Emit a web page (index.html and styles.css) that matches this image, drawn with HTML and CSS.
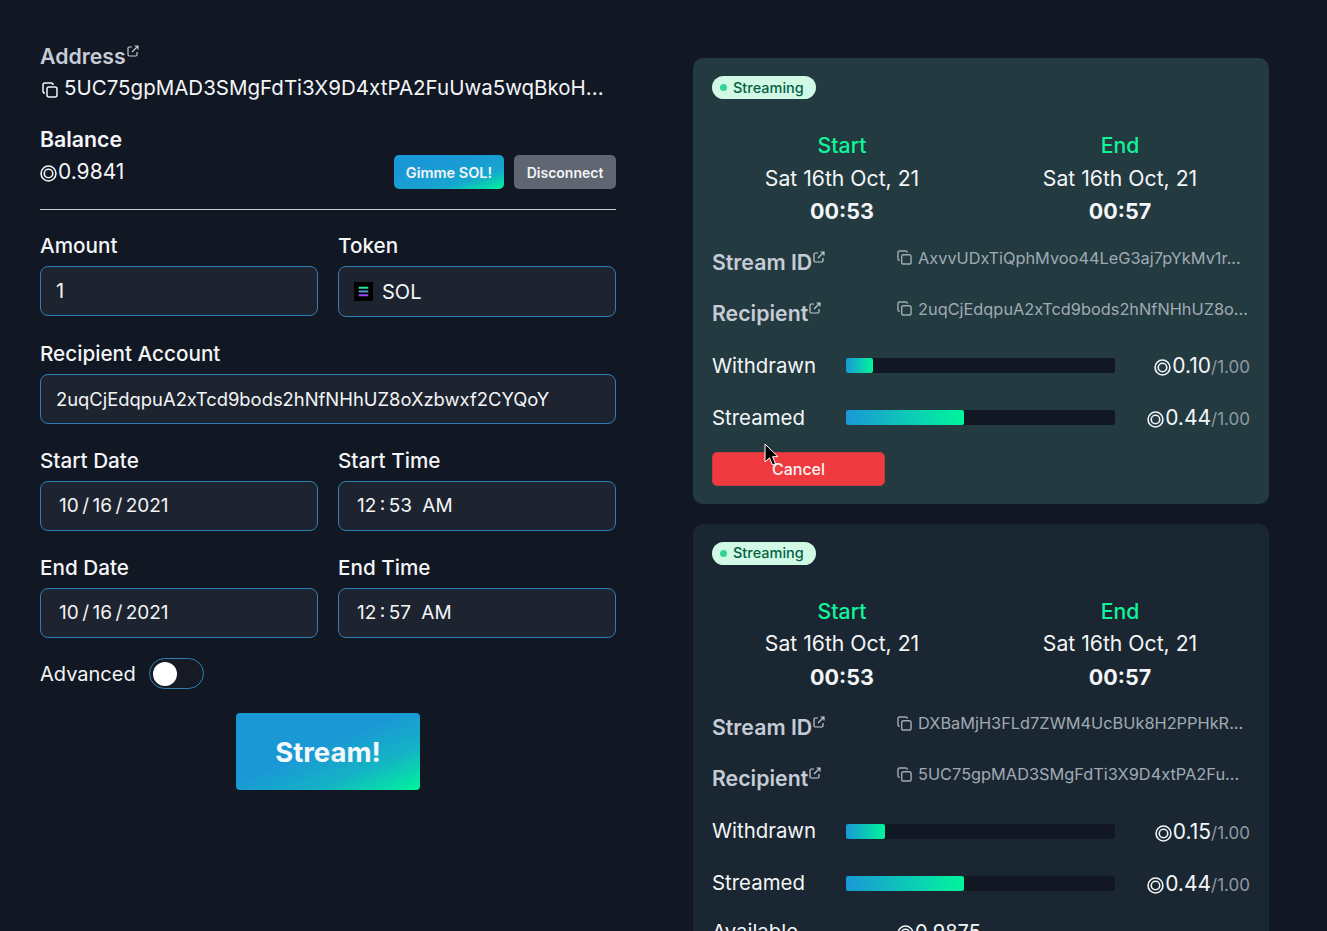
FILE: index.html
```html
<!DOCTYPE html>
<html lang="en">
<head>
<meta charset="utf-8">
<title>Streamflow</title>
<link rel="stylesheet" href="styles.css">
</head>
<body>
<svg class="sprites" width="0" height="0" aria-hidden="true">
  <symbol id="ext" viewBox="0 0 12 12"><path d="M5 2H2.2C1.5 2 1 2.5 1 3.2v6.6C1 10.500 1.500 11 2.200 11h6.600c.7 0 1.200-.5 1.200-1.200V7M5 7l6-6M7.500 1H11v3.500" fill="none" stroke="currentColor" stroke-width="1.200"/></symbol>
  <symbol id="copy" viewBox="0 0 16 16"><rect x="5" y="5" width="10" height="10" rx="2" fill="none" stroke="currentColor" stroke-width="1.500"/><path d="M11 3V2.800C11 1.800 10.200 1 9.200 1H2.800C1.800 1 1 1.800 1 2.800v6.400C1 10.200 1.800 11 2.800 11H3" fill="none" stroke="currentColor" stroke-width="1.500"/></symbol>
  <symbol id="sol" viewBox="0 0 16 16"><circle cx="8" cy="8" r="7" fill="none" stroke="currentColor" stroke-width="1.500"/><circle cx="8" cy="8" r="4" fill="none" stroke="currentColor" stroke-width="1.500"/></symbol>
</svg>
<main class="page">
  <section class="form">
    <div class="label-muted">Address<svg class="ext"><use href="#ext"/></svg></div>
    <div class="address"><svg class="copy"><use href="#copy"/></svg>5UC75gpMAD3SMgFdTi3X9D4xtPA2FuUwa5wqBkoH...</div>
    <div class="balance-row">
      <div>
        <div class="balance-title">Balance</div>
        <div class="balance-value"><svg class="sol"><use href="#sol"/></svg>0.9841</div>
      </div>
      <div class="actions">
        <button class="btn btn-grad">Gimme SOL!</button>
        <button class="btn btn-gray">Disconnect</button>
      </div>
    </div>
    <hr class="divider">
    <div class="fields">
      <div class="field"><label>Amount</label><div class="input">1</div></div>
      <div class="field"><label>Token</label><div class="input input-token">
        <svg class="token" viewBox="0 0 20 20"><rect width="20" height="20" fill="#000"/><path d="M5 6h10M5 10h10M5 14h10" stroke="url(#solgrad)" stroke-width="2"/><defs><linearGradient id="solgrad" x1="0" y1="0" x2="0" y2="1"><stop offset="0" stop-color="#14f195"/><stop offset="1" stop-color="#9945ff"/></linearGradient></defs></svg>SOL</div></div>
      <div class="field wide"><label>Recipient Account</label><div class="input input-account">2uqCjEdqpuA2xTcd9bods2hNfNHhUZ8oXzbwxf2CYQoY</div></div>
      <div class="field"><label>Start Date</label><div class="input input-dt">10 / 16 / 2021</div></div>
      <div class="field"><label>Start Time</label><div class="input input-dt">12 : 53 &nbsp; AM</div></div>
      <div class="field"><label>End Date</label><div class="input input-dt">10 / 16 / 2021</div></div>
      <div class="field"><label>End Time</label><div class="input input-dt">12 : 57 &nbsp; AM</div></div>
    </div>
    <div class="advanced">Advanced<span class="toggle"><span class="knob"></span></span></div>
    <div class="submit-row"><button class="btn-stream">Stream!</button></div>
  </section>

  <section class="streams">
    <article class="card card-active">
      <span class="badge"><i class="dot"></i>Streaming</span>
      <div class="times">
        <div><div class="t-label">Start</div><div>Sat 16th Oct, 21</div><div class="t-time">00:53</div></div>
        <div><div class="t-label">End</div><div>Sat 16th Oct, 21</div><div class="t-time">00:57</div></div>
      </div>
      <div class="id-row"><div class="label-muted">Stream ID<svg class="ext"><use href="#ext"/></svg></div><div class="id-value"><svg class="copy-sm"><use href="#copy"/></svg>AxvvUDxTiQphMvoo44LeG3aj7pYkMv1r...</div></div>
      <div class="id-row"><div class="label-muted">Recipient<svg class="ext"><use href="#ext"/></svg></div><div class="id-value"><svg class="copy-sm"><use href="#copy"/></svg>2uqCjEdqpuA2xTcd9bods2hNfNHhUZ8o...</div></div>
      <div class="bar-row"><span>Withdrawn</span><div class="track"><div class="fill" style="width:10%"></div></div><div class="amount"><svg class="sol"><use href="#sol"/></svg>0.10<small>/1.00</small></div></div>
      <div class="bar-row"><span>Streamed</span><div class="track"><div class="fill" style="width:44%"></div></div><div class="amount"><svg class="sol"><use href="#sol"/></svg>0.44<small>/1.00</small></div></div>
      <button class="btn-cancel">Cancel</button>
      <svg class="cursor" viewBox="0 0 14 24" width="14" height="24"><path d="M1 1v18l4.500-4.200L8.500 22l3-1.300-3-7H14z" fill="#000" stroke="#fff" stroke-width="1"/></svg>
    </article>

    <article class="card card-plain">
      <span class="badge"><i class="dot"></i>Streaming</span>
      <div class="times">
        <div><div class="t-label">Start</div><div>Sat 16th Oct, 21</div><div class="t-time">00:53</div></div>
        <div><div class="t-label">End</div><div>Sat 16th Oct, 21</div><div class="t-time">00:57</div></div>
      </div>
      <div class="id-row"><div class="label-muted">Stream ID<svg class="ext"><use href="#ext"/></svg></div><div class="id-value"><svg class="copy-sm"><use href="#copy"/></svg>DXBaMjH3FLd7ZWM4UcBUk8H2PPHkR...</div></div>
      <div class="id-row"><div class="label-muted">Recipient<svg class="ext"><use href="#ext"/></svg></div><div class="id-value"><svg class="copy-sm"><use href="#copy"/></svg>5UC75gpMAD3SMgFdTi3X9D4xtPA2Fu...</div></div>
      <div class="bar-row"><span>Withdrawn</span><div class="track"><div class="fill" style="width:14.500%"></div></div><div class="amount"><svg class="sol"><use href="#sol"/></svg>0.15<small>/1.00</small></div></div>
      <div class="bar-row"><span>Streamed</span><div class="track"><div class="fill" style="width:44%"></div></div><div class="amount"><svg class="sol"><use href="#sol"/></svg>0.44<small>/1.00</small></div></div>
      <div class="avail-row"><span>Available</span><div class="avail-value"><svg class="sol"><use href="#sol"/></svg>0.9875</div></div>
    </article>
  </section>
</main>
</body>
</html>
```
FILE: styles.css
```css
* { box-sizing: border-box; }
html, body { margin: 0; height: 931px; overflow: hidden; }
body { background: #111723; color: #f3f5f7; font-family: Inter, "Liberation Sans", sans-serif; font-size: 20px; line-height: 28px; }
.sprites { position: absolute; }
.page { display: grid; grid-template-columns: 576px 576px; column-gap: 77px; padding: 0 0 0 40px; }
.form { padding-top: 42px; }
.label-muted { font-size: 21.300px; font-weight: 600; color: #c6ccd6; display: flex; align-items: flex-start; height: 28px; }
.ext { width: 12px; height: 12px; margin: 3px 0 0 1px; color: #c6ccd6; }
.address { display: flex; align-items: center; height: 28px; margin-top: 4px; font-size: 20.500px; white-space: nowrap; }
.copy { width: 16px; height: 16px; margin: 4px 6px 0 2px; }
.balance-row { display: flex; justify-content: space-between; align-items: flex-end; margin-top: 24px; }
.balance-title { font-size: 21.300px; font-weight: 600; height: 28px; line-height: 26px; }
.balance-value { display: flex; align-items: center; margin-top: 4px; height: 28px; font-size: 21px; }
.sol { width: 17px; height: 17px; margin: 3px 1px 0 0; vertical-align: -3px; }
.actions { display: flex; gap: 10px; margin-bottom: -3px; }
.btn { height: 34px; border: 0; border-radius: 5px; color: #f3f5f7; font: 600 14px Inter, sans-serif; padding: 0 8px; }
.btn-grad { background: linear-gradient(to bottom right, #1a98d6 30%, #17a5cf 70%, #00f59b 100%); width: 110px; font-size: 14.500px; }
.btn-gray { background: #5f6571; width: 102px; }
.divider { border: 0; height: 1px; background: #c9ced6; margin: 23px 0 22px; }
.fields { display: grid; grid-template-columns: 278px 278px; column-gap: 20px; row-gap: 23px; }
.field.wide { grid-column: 1 / -1; }
.field label { display: block; height: 28px; margin-bottom: 6px; font-size: 20.700px; font-weight: 500; }
.input { height: 50px; display: flex; align-items: center; padding: 0 15px; background: #1d2430; border: 1px solid #2d80b3; border-radius: 8px; font-size: 20px; white-space: nowrap; }
.input-account { font-size: 18.400px; }
.input-dt { padding-left: 18px; font-size: 19px; word-spacing: -1.900px; }
.input-token { height: 51px; }
.token { width: 19px; height: 19px; margin-right: 9px; }
.advanced { display: flex; align-items: center; gap: 13px; margin-top: 20px; height: 31px; }
.toggle { width: 55px; height: 31px; padding: 3px; border: 1px solid #2d80b3; border-radius: 16px; background: #161a24; }
.knob { display: block; width: 24px; height: 24px; border-radius: 50%; background: #fff; }
.submit-row { display: flex; justify-content: center; margin-top: 24px; }
.btn-stream { width: 184px; height: 77px; border: 0; border-radius: 4px; background: linear-gradient(to bottom right, #1a98d6 45%, #14b3c5 72%, #00f59b 100%); color: #f5f8fa; font: 700 27.500px Inter, sans-serif; }
.streams { padding-top: 58px; display: flex; flex-direction: column; gap: 20px; }
.card { position: relative; flex: none; padding: 18px 19px 18px; border-radius: 10px; }
.card-active { background: #233a41; }
.card-plain { background: #1a2732; }
.badge { display: flex; width: fit-content; align-items: center; height: 23px; padding: 0 12px 0 8px; border-radius: 12px; background: #d0fae5; color: #065f46; font-size: 14.500px; font-weight: 500; }
.dot { width: 7px; height: 7px; margin-right: 6px; border-radius: 50%; background: #34d399; }
.times { display: grid; grid-template-columns: 1fr 1fr; column-gap: 18px; margin-top: 30px; text-align: center; font-size: 21.200px; line-height: 32.500px; }
.t-label { color: #0ff59a; font-weight: 500; }
.t-time { margin-top: 1px; font-weight: 700; font-size: 21.500px; }
.id-row { display: grid; grid-template-columns: 185px 1fr; margin-top: 20px; height: 32px; }
.id-row + .id-row { margin-top: 19px; }
.id-value { display: flex; align-items: center; height: 24px; margin-top: -2px; color: #a0aab3; font-size: 16.350px; white-space: nowrap; }
.copy-sm { width: 15px; height: 15px; margin-right: 6px; color: #a0aab3; }
.bar-row { display: grid; grid-template-columns: 134px 269px 1fr; align-items: center; height: 32px; margin-top: 19px; font-size: 20.400px; }
.bar-row + .bar-row { margin-top: 20px; }
.track { height: 15px; border-radius: 2px; background: #111723; }
.fill { height: 100%; border-radius: 2px; background: linear-gradient(to right, #1a98d6, #00f59b); }
.amount { padding-top: 2px; text-align: right; font-size: 21px; white-space: nowrap; }
.amount small { font-size: 17px; color: #8f9aa3; }
.btn-cancel { display: block; width: 173px; height: 34px; margin-top: 18px; border: 1px solid #c73a3f; border-radius: 5px; background: #ef3a3f; color: #f8f3f3; font: 500 16px Inter, sans-serif; }
.cursor { position: absolute; left: 71px; top: 385px; }
.avail-row { display: grid; grid-template-columns: 185px 1fr; margin-top: 19px; height: 60px; font-size: 20.400px; }
.avail-value { font-size: 20px; }
```
